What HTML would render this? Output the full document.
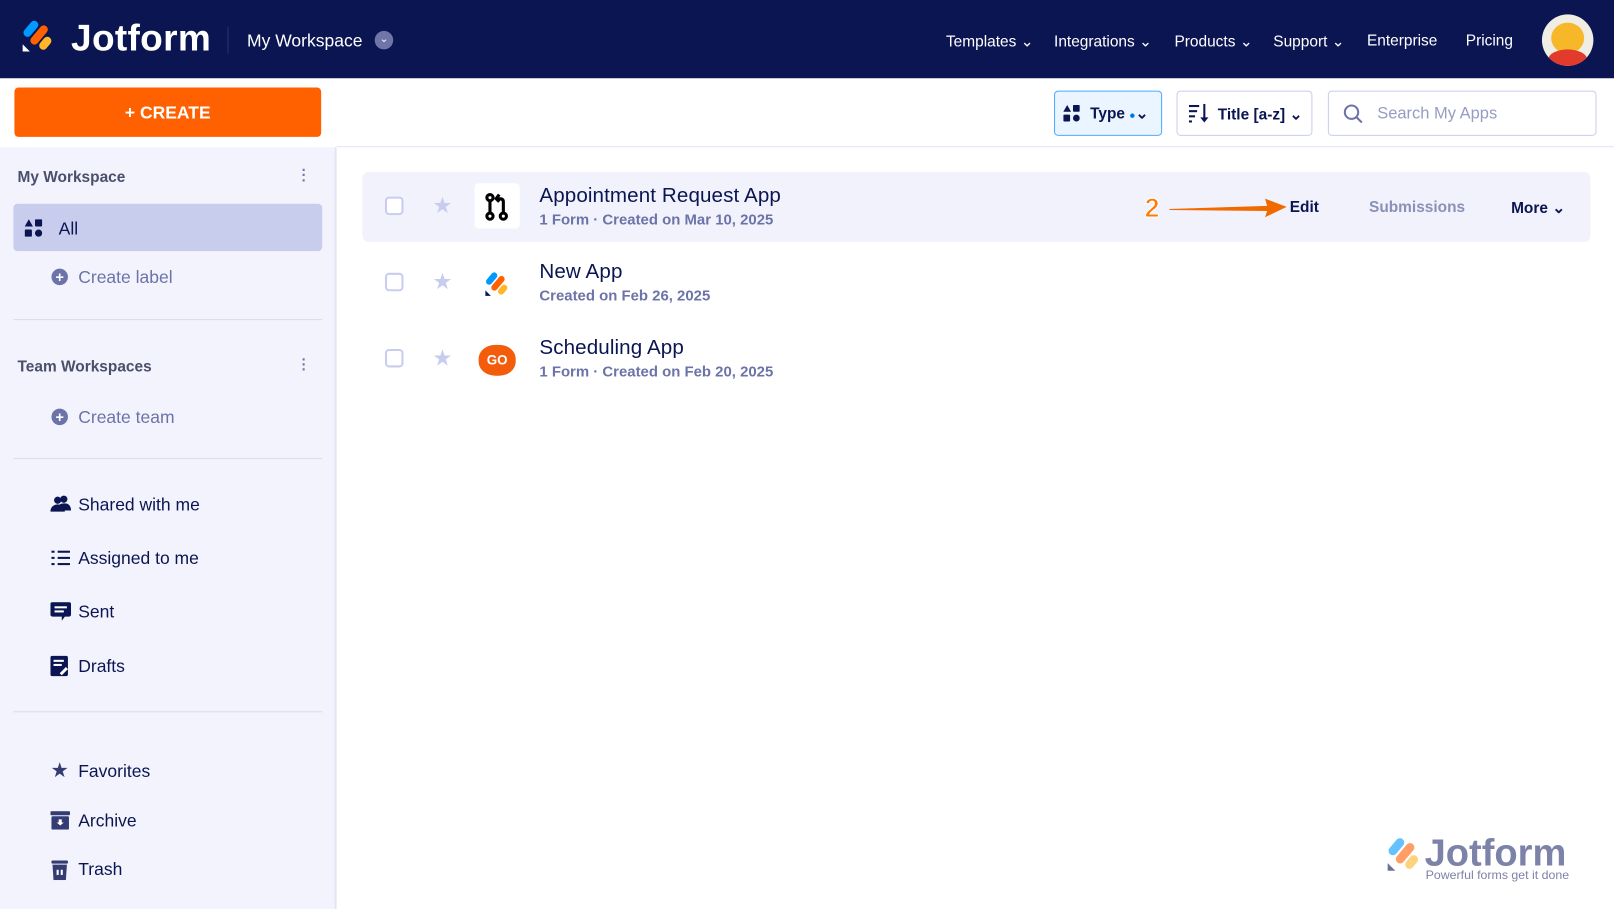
<!DOCTYPE html>
<html><head><meta charset="utf-8"><style>
*{box-sizing:border-box;margin:0;padding:0}
html,body{width:1614px;height:909px;overflow:hidden;background:#fff;font-family:"Liberation Sans",sans-serif}
#w{width:1568px;height:883px;transform:scale(1.02934);transform-origin:0 0;position:relative;background:#fff}
.top{position:absolute;left:0;top:0;width:1568px;height:76px;background:#0a1551}
.abs{position:absolute}
.nav{color:#fff;font-size:15px;top:31px}
.side{position:absolute;left:0;top:76px;width:327px;height:807px;background:#f3f3fe;border-right:2px solid #e3e5f5}
.hr{position:absolute;left:13px;width:300px;height:1px;background:#dadce8}
.si{position:absolute;left:76px;font-size:17px;color:#0a1551}
.ic{position:absolute;left:49px}
.row{position:absolute;left:352px;width:1193px;height:68px}
.cb{position:absolute;left:22px;width:18px;height:18px;border:2px solid #c8cdf0;border-radius:4px;background:#fff}
.t{position:absolute;left:172px;font-size:20px;color:#0a1551;letter-spacing:.1px}
.s{position:absolute;left:172px;font-size:14.5px;color:#6c73a8;font-weight:bold}
</style></head><body><div id="w">
<div class="top">
 <svg class="abs" style="left:20px;top:18px" width="34" height="34" viewBox="0 0 34 34"><rect x="6" y="1" width="8" height="18" rx="4" fill="#0099ff" transform="rotate(40 10 10)"/><rect x="14" y="5" width="8" height="22" rx="4" fill="#ff6100" transform="rotate(40 18 16)"/><rect x="20" y="17" width="8" height="14" rx="4" fill="#ffb629" transform="rotate(40 24 24)"/><path d="M2 32 L2 25 L9 32Z" fill="#fff"/></svg>
 <div class="abs" style="left:69px;top:16px;color:#fff;font-size:36px;font-weight:bold;letter-spacing:.3px">Jotform</div>
 <div class="abs" style="left:221px;top:26px;width:1px;height:26px;background:#2b3470"></div>
 <div class="abs" style="left:240px;top:30px;color:#fff;font-size:17px">My Workspace</div>
 <div class="abs" style="left:364px;top:30px;width:18px;height:18px;border-radius:50%;background:#6f76a7;color:#fff;font-size:10px;text-align:center;line-height:18px">⌄</div>
 <div class="abs nav" style="left:919px">Templates ⌄</div>
 <div class="abs nav" style="left:1024px">Integrations ⌄</div>
 <div class="abs nav" style="left:1141px">Products ⌄</div>
 <div class="abs nav" style="left:1237px">Support ⌄</div>
 <div class="abs nav" style="left:1328px">Enterprise</div>
 <div class="abs nav" style="left:1424px">Pricing</div>
 <div class="abs" style="left:1498px;top:14px;width:50px;height:50px;border-radius:50%;background:#f0ede4;overflow:hidden"><div style="position:absolute;left:9px;top:8px;width:32px;height:30px;border-radius:50%;background:#f6b728"></div><div style="position:absolute;left:6px;top:34px;width:38px;height:20px;border-radius:50% 50% 0 0;background:#e23a2b"></div></div>
</div>
<div class="abs" style="left:14px;top:85px;width:298px;height:48px;background:#ff6100;border-radius:4px;color:#fff;font-weight:bold;font-size:17px;text-align:center;line-height:50px">+ CREATE</div>
<div class="abs" style="left:327px;top:142px;width:1241px;height:1px;background:#e3e5f5"></div>
<div class="side" style="top:143px;height:740px">
 <div class="abs" style="left:17px;top:21px;font-size:15px;font-weight:bold;color:#4a4f6a">My Workspace</div>
 <div class="abs" style="left:293px;top:20px;color:#6c73a8;font-weight:bold;line-height:5px;font-size:14px">·<br>·<br>·</div>
 <div class="abs" style="left:13px;top:55px;width:300px;height:46px;background:#c8cdee;border-radius:4px"></div>
 <svg class="abs" style="left:24px;top:70px" width="17" height="17" viewBox="0 0 17 17" fill="#0a1551"><path d="M4 0 L8 7 L0 7Z"/><rect x="10" y="0" width="7" height="7" rx="1"/><rect x="0" y="10" width="7" height="7" rx="1"/><circle cx="13.5" cy="13.5" r="3.5"/></svg>
 <div class="abs" style="left:57px;top:70px;font-size:17px;color:#0a1551">All</div>
 <div class="abs" style="left:50px;top:118px;width:16px;height:16px;border-radius:50%;background:#6c73a8;color:#fff;font-size:14px;text-align:center;line-height:16px;font-weight:bold">+</div>
 <div class="abs" style="left:76px;top:117px;font-size:17px;color:#6c73a8">Create label</div>
 <div class="hr" style="top:167px"></div>
 <div class="abs" style="left:17px;top:205px;font-size:15px;font-weight:bold;color:#4a4f6a">Team Workspaces</div>
 <div class="abs" style="left:293px;top:204px;color:#6c73a8;font-weight:bold;line-height:5px;font-size:14px">·<br>·<br>·</div>
 <div class="abs" style="left:50px;top:254px;width:16px;height:16px;border-radius:50%;background:#6c73a8;color:#fff;font-size:14px;text-align:center;line-height:16px;font-weight:bold">+</div>
 <div class="abs" style="left:76px;top:253px;font-size:17px;color:#6c73a8">Create team</div>
 <div class="hr" style="top:302px"></div>
 <svg class="ic" style="top:338px" width="20" height="18" viewBox="0 0 20 18" fill="#0a1551"><circle cx="7" cy="5" r="3.5"/><circle cx="13" cy="4" r="3.5"/><path d="M0 16c0-5 4-7 7-7s7 2 7 7Z"/><path d="M9 9c2-1 4-1 5-1 4 0 6 3 6 7H14Z"/></svg>
 <div class="si" style="top:338px">Shared with me</div>
 <svg class="ic" style="top:391px" width="19" height="16" viewBox="0 0 19 16" fill="#0a1551"><rect x="7" y="1" width="12" height="2"/><rect x="7" y="7" width="12" height="2"/><rect x="7" y="13" width="12" height="2"/><rect x="1" y="1" width="3" height="2"/><rect x="1" y="7" width="3" height="2"/><rect x="1" y="13" width="3" height="2"/></svg>
 <div class="si" style="top:390px">Assigned to me</div>
 <svg class="ic" style="top:442px" width="20" height="19" viewBox="0 0 20 19"><path d="M2 0h16a2 2 0 0 1 2 2v10a2 2 0 0 1-2 2h-4l-3 4v-4H2a2 2 0 0 1-2-2V2a2 2 0 0 1 2-2z" fill="#0a1551"/><rect x="4" y="4" width="12" height="2" fill="#fff"/><rect x="4" y="8" width="9" height="2" fill="#fff"/></svg>
 <div class="si" style="top:442px">Sent</div>
 <svg class="ic" style="top:494px" width="18" height="20" viewBox="0 0 18 20"><rect x="0" y="0" width="17" height="20" rx="2" fill="#0a1551"/><rect x="3" y="4" width="10" height="2" fill="#fff"/><rect x="3" y="8" width="8" height="2" fill="#fff"/><path d="M9 17l6-6 2 2-6 6z" fill="#fff"/></svg>
 <div class="si" style="top:495px">Drafts</div>
 <div class="hr" style="top:548px"></div>
 <div class="abs" style="left:49px;top:593px;font-size:20px;color:#343c74">★</div>
 <div class="si" style="top:597px">Favorites</div>
 <svg class="ic" style="top:645px" width="19" height="18" viewBox="0 0 19 18" fill="#343c74"><rect x="0" y="0" width="19" height="4" rx="1"/><rect x="1" y="5" width="17" height="13" rx="1"/><path d="M8 8h3v3h2l-3.5 3-3.5-3h2z" fill="#fff"/></svg>
 <div class="si" style="top:645px">Archive</div>
 <svg class="ic" style="top:692px" width="18" height="20" viewBox="0 0 18 20" fill="#343c74"><rect x="1" y="1" width="16" height="3" rx="1"/><path d="M2 5h14l-1 15H3z"/><rect x="6" y="10" width="2" height="5" fill="#fff"/><rect x="10" y="10" width="2" height="5" fill="#fff"/></svg>
 <div class="si" style="top:692px">Trash</div>
</div>
<!-- toolbar -->
<div class="abs" style="left:1024px;top:88px;width:105px;height:44px;border:1px solid #4fa9ff;background:#eaf5ff;border-radius:4px"></div>
<svg class="abs" style="left:1033px;top:102px" width="16" height="16" viewBox="0 0 17 17" fill="#0a1551"><path d="M4 0 L8 7 L0 7Z"/><rect x="10" y="0" width="7" height="7" rx="1"/><rect x="0" y="10" width="7" height="7" rx="1"/><circle cx="13.5" cy="13.5" r="3.5"/></svg>
<div class="abs" style="left:1059px;top:101px;font-size:15px;font-weight:bold;color:#0a1551">Type <span style="color:#0075e3;font-size:10px">●</span>⌄</div>
<div class="abs" style="left:1143px;top:88px;width:132px;height:44px;border:1px solid #c8ceed;border-radius:4px"></div>
<svg class="abs" style="left:1155px;top:100px" width="20" height="20" viewBox="0 0 20 20" fill="#0a1551"><rect x="0" y="2" width="10" height="2"/><rect x="0" y="7" width="8" height="2"/><rect x="0" y="12" width="6" height="2"/><rect x="0" y="17" width="3" height="2"/><rect x="14" y="1" width="2" height="15"/><path d="M11 14h8l-4 5z"/></svg>
<div class="abs" style="left:1183px;top:102px;font-size:15px;font-weight:bold;color:#0a1551">Title [a-z] ⌄</div>
<div class="abs" style="left:1290px;top:88px;width:261px;height:44px;border:1px solid #c8ceed;border-radius:4px"></div>
<svg class="abs" style="left:1305px;top:101px" width="20" height="20" viewBox="0 0 20 20" fill="none" stroke="#6c73a8" stroke-width="2"><circle cx="8" cy="8" r="6.5"/><path d="M13 13l5 5"/></svg>
<div class="abs" style="left:1338px;top:102px;font-size:16px;color:#979cc2">Search My Apps</div>
<!-- rows -->
<div class="row" style="top:167px;background:#f1f2fc;border-radius:6px">
 <div class="cb" style="top:24px"></div><div class="abs" style="left:68px;top:20px;font-size:22px;color:#c8cdf0">★</div>
 <div class="abs" style="left:109px;top:11px;width:44px;height:44px;background:#fff;border-radius:4px"></div>
 <svg class="abs" style="left:116px;top:19px" width="30" height="30" viewBox="0 0 30 30" fill="none" stroke="#000" stroke-width="3"><circle cx="8" cy="6" r="3"/><circle cx="8" cy="24" r="3"/><path d="M8 9v12"/><circle cx="21" cy="24" r="3"/><path d="M21 21V10q0-3-4-3h-3m3-4l-3 4 3 3"/></svg>
 <div class="t" style="top:12px">Appointment Request App</div>
 <div class="s" style="top:39px">1 Form · Created on Mar 10, 2025</div>
 <div class="abs" style="left:760px;top:20px;font-size:26px;font-weight:bold;color:#ff7a00;-webkit-text-stroke:1px #fff">2</div>
 <svg class="abs" style="left:784px;top:24px" width="115" height="22" viewBox="0 0 115 22"><path d="M0 12 L95 9 L93 2 L114 10 L93 20 L95 14 L0 13Z" fill="#f06a00"/></svg>
 <div class="abs" style="left:901px;top:26px;font-size:15px;font-weight:bold;color:#0a1551">Edit</div>
 <div class="abs" style="left:978px;top:26px;font-size:15px;font-weight:bold;color:#8a90b8">Submissions</div>
 <div class="abs" style="left:1116px;top:26px;font-size:15px;font-weight:bold;color:#0a1551">More ⌄</div>
</div>
<div class="row" style="top:241px">
 <div class="cb" style="top:24px"></div><div class="abs" style="left:68px;top:20px;font-size:22px;color:#c8cdf0">★</div>
 <svg class="abs" style="left:118px;top:22px" width="26" height="26" viewBox="0 0 34 34"><rect x="6" y="1" width="8" height="18" rx="4" fill="#0099ff" transform="rotate(40 10 10)"/><rect x="14" y="5" width="8" height="22" rx="4" fill="#ff6100" transform="rotate(40 18 16)"/><rect x="20" y="17" width="8" height="14" rx="4" fill="#ffb629" transform="rotate(40 24 24)"/><path d="M2 32 L2 25 L9 32Z" fill="#0a1551"/></svg>
 <div class="t" style="top:12px">New App</div>
 <div class="s" style="top:39px">Created on Feb 26, 2025</div>
</div>
<div class="row" style="top:315px">
 <div class="cb" style="top:24px"></div><div class="abs" style="left:68px;top:20px;font-size:22px;color:#c8cdf0">★</div>
 <div class="abs" style="left:113px;top:20px;width:36px;height:30px;border-radius:45%;background:#f25c0a;color:#fff;font-weight:bold;font-size:13px;text-align:center;line-height:30px">GO</div>
 <div class="t" style="top:12px">Scheduling App</div>
 <div class="s" style="top:39px">1 Form · Created on Feb 20, 2025</div>
</div>
<svg class="abs" style="left:1346px;top:812px" width="36" height="36" viewBox="0 0 34 34" opacity=".6"><rect x="6" y="1" width="8" height="18" rx="4" fill="#0099ff" transform="rotate(40 10 10)"/><rect x="14" y="5" width="8" height="22" rx="4" fill="#ff6100" transform="rotate(40 18 16)"/><rect x="20" y="17" width="8" height="14" rx="4" fill="#ffb629" transform="rotate(40 24 24)"/><path d="M2 32 L2 25 L9 32Z" fill="#0a1551"/></svg>
<div class="abs" style="left:1384px;top:808px;font-size:37px;font-weight:bold;color:#7d82a8">Jotform</div>
<div class="abs" style="left:1385px;top:843px;font-size:12px;color:#7d82a8">Powerful forms get it done</div>
</div></body></html>
